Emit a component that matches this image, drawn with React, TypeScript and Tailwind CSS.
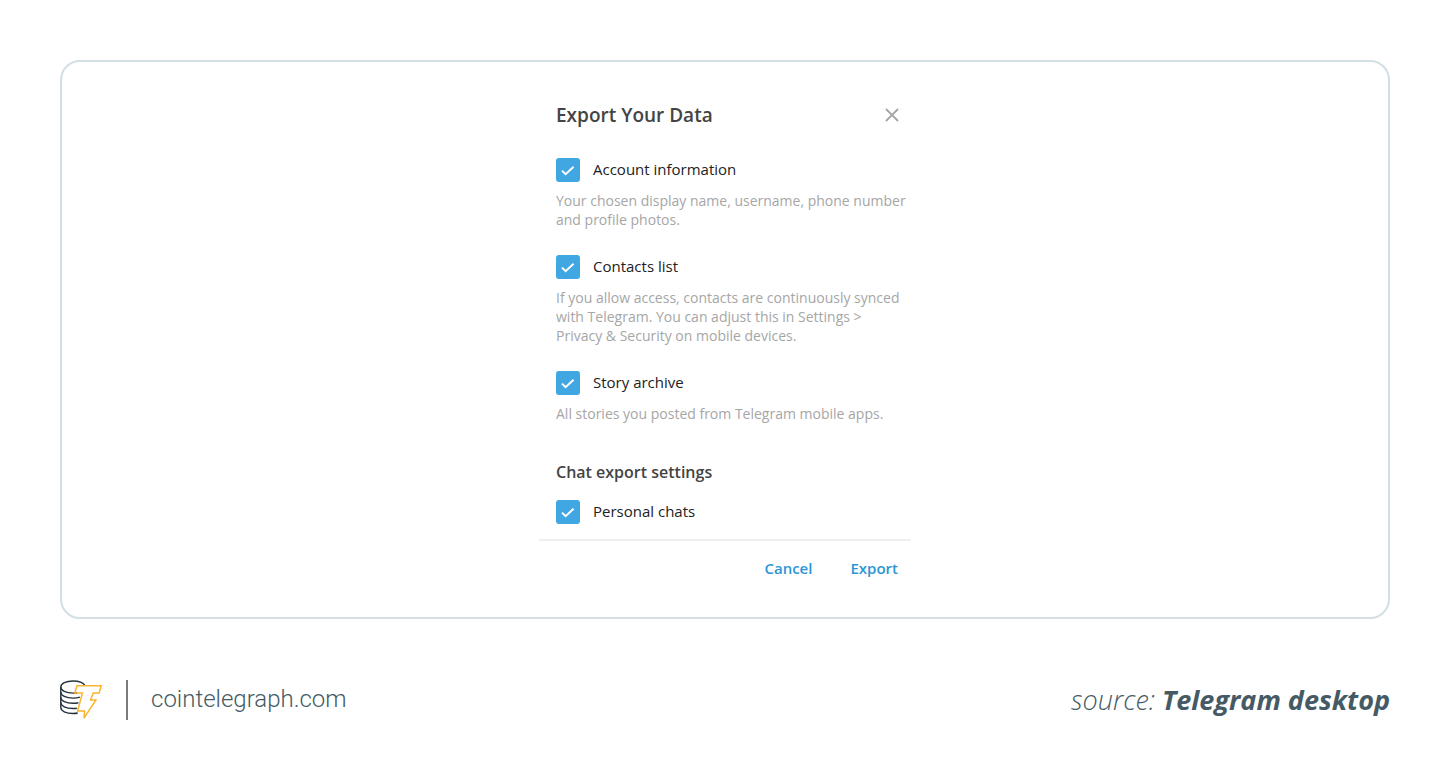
import { useState } from 'react';

type ExportOption = {
  id: string;
  label: string;
  description?: string;
};

const ACCOUNT_OPTIONS: ExportOption[] = [
  {
    id: 'account',
    label: 'Account information',
    description: 'Your chosen display name, username, phone number\nand profile photos.',
  },
  {
    id: 'contacts',
    label: 'Contacts list',
    description:
      'If you allow access, contacts are continuously synced\nwith Telegram. You can adjust this in Settings >\nPrivacy & Security on mobile devices.',
  },
  {
    id: 'stories',
    label: 'Story archive',
    description: 'All stories you posted from Telegram mobile apps.',
  },
];

const CHAT_OPTIONS: ExportOption[] = [{ id: 'personal', label: 'Personal chats' }];

const OptionRow = ({ option }: { option: ExportOption }) => {
  const [checked, setChecked] = useState(true);

  return (
    <div>
      <label htmlFor={option.id} className="flex h-6 items-center gap-[13px] text-[15px] leading-5 text-[#222]">
        <span className="grid h-6 w-6 shrink-0">
          <input
            id={option.id}
            type="checkbox"
            checked={checked}
            onChange={() => setChecked((current) => !current)}
            className="peer col-start-1 row-start-1 h-6 w-6 appearance-none rounded-[3px] border-2 border-[#b3b3b3] checked:border-[#40a7e3] checked:bg-[#40a7e3]"
          />
          <svg
            viewBox="0 0 24 24"
            aria-hidden="true"
            className="pointer-events-none invisible col-start-1 row-start-1 h-6 w-6 fill-none stroke-white peer-checked:visible"
          >
            <path d="M6 12.6l3.6 3.6 8-7.4" strokeWidth="2" />
          </svg>
        </span>
        <span className="pb-0.5">{option.label}</span>
      </label>
      {option.description ? (
        <p className="mt-[9px] text-[14px] leading-[19px] whitespace-pre-line text-[#a6a6a6]">{option.description}</p>
      ) : null}
    </div>
  );
};

const CoinLogo = () => (
  <svg viewBox="0 0 42 40" aria-hidden="true" className="h-10 w-[42px] fill-none">
    <g stroke="#24333d" strokeWidth="1.4">
      <path d="M24.8 5.4C23.4 2.900 18.900 1 13 1 6.100 1 0.800 3.600 0.800 7.100s5.200 6 12.200 6c1.500 0 2.900-.1 4.200-.3" />
      <path d="M0.8 7v20.600c0 3.400 5.200 5.900 12.200 5.900 1.700 0 3.300-.1 4.700-.5" />
      <path d="M0.800 12.200c0 3.400 5.200 5.900 12.200 5.900 2.600 0 5-.3 6.900-.9" />
      <path d="M0.800 17.400c0 3.400 5.200 5.900 12.200 5.900 2 0 3.800-.2 5.400-.6" />
      <path d="M0.800 22.600c0 3.400 5.200 5.900 12.200 5.900 1.400 0 2.700-.1 3.900-.3" />
    </g>
    <path
      d="M17 5.700H41.200L39.100 13.100H33.300L30.600 20H35.900L24 38.200 24.600 31H17.600L22.400 13.100H14.700Z"
      stroke="#f9b42d"
      strokeWidth="1.5"
    />
  </svg>
);

const App = () => {
  return (
    <div className="bg-white p-[60px] font-['Open_Sans',sans-serif]">
      <main className="rounded-[20px] border-2 border-[#d3dfe4] pt-[39px] pb-9">
        <section aria-labelledby="export-title" className="mx-auto w-[372px]">
          <div className="pl-[17px]">
            <header className="flex h-7 items-center justify-between pr-2.5">
              <h1 id="export-title" className="text-[19px] font-semibold text-[#444]">
                Export Your Data
              </h1>
              <button type="button" aria-label="Close" className="p-0.5">
                <svg viewBox="0 0 14 14" className="h-3.5 w-3.5 stroke-[#a6a6a6]">
                  <path d="M1 1l12 12M13 1L1 13" strokeWidth="1.8" />
                </svg>
              </button>
            </header>

            <div className="mt-[29px] flex flex-col gap-[26px]">
              {ACCOUNT_OPTIONS.map((option) => (
                <OptionRow key={option.id} option={option} />
              ))}
            </div>

            <h2 className="mt-[37px] mb-4 text-[16px] leading-6 font-semibold text-[#444]">Chat export settings</h2>
            {CHAT_OPTIONS.map((option) => (
              <OptionRow key={option.id} option={option} />
            ))}
          </div>

          <footer className="mt-[15px] flex justify-end gap-[38px] border-t-2 border-[#efefef] pt-[15px] pr-[13px] pb-px text-[15px] leading-6 font-semibold text-[#2b96d6]">
            <button type="button">Cancel</button>
            <button type="button">Export</button>
          </footer>
        </section>
      </main>

      <div className="mt-[61px] flex items-center justify-between text-[#455a64]">
        <div className="flex items-center">
          <CoinLogo />
          <a
            href="#cointelegraph"
            className="ml-6 flex h-10 items-center border-l-2 border-[#7b7b7b] pb-0.5 pl-[23px] font-['Roboto',sans-serif] text-[24px] leading-8 font-light"
          >
            cointelegraph.com
          </a>
        </div>
        <p className="text-[27px] leading-10 font-light italic">
          source: <strong className="font-bold">Telegram desktop</strong>
        </p>
      </div>
    </div>
  );
};

export default App;
